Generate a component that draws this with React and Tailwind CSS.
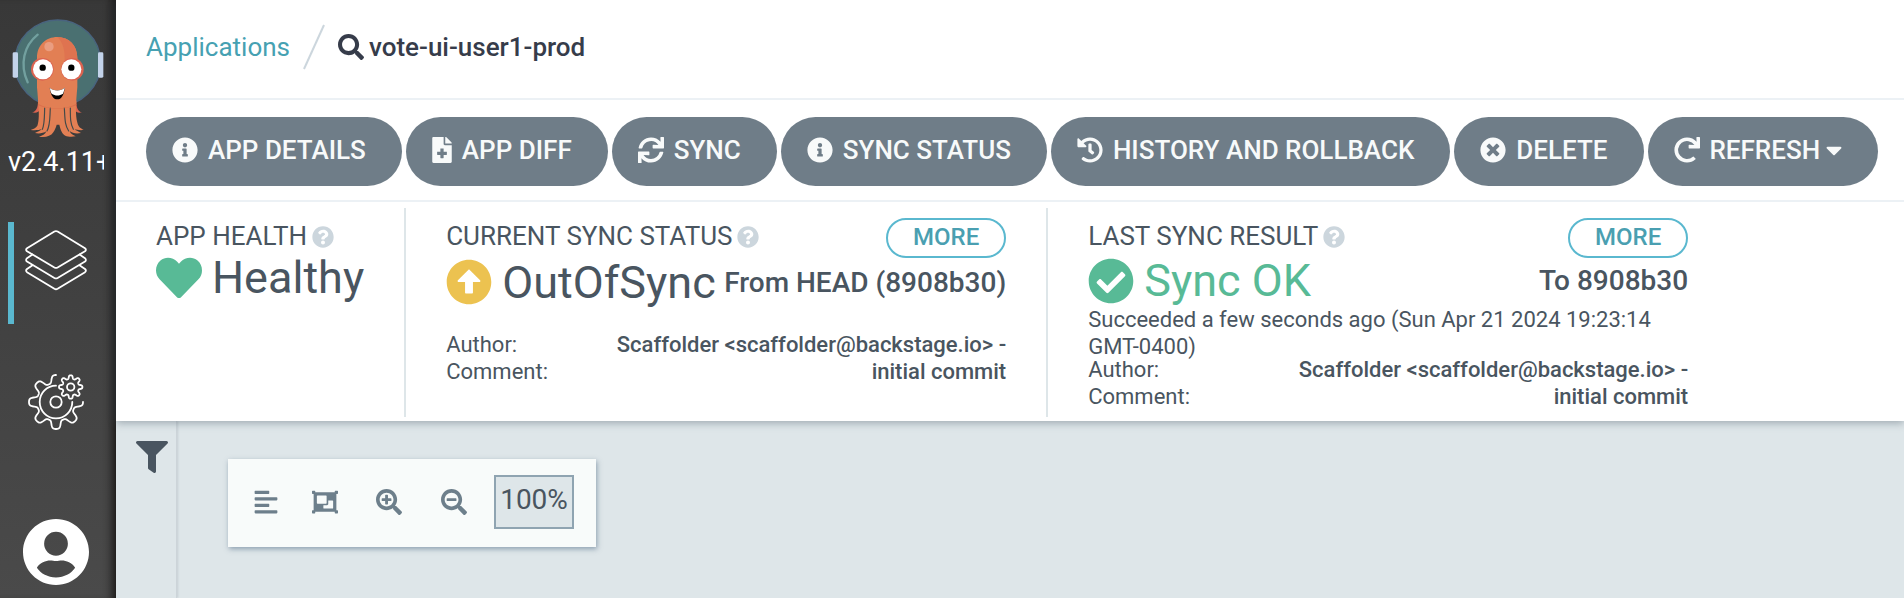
import React from 'react';
import {
  FaAlignLeft,
  FaArrowAltCircleUp,
  FaCaretDown,
  FaCheckCircle,
  FaFileMedical,
  FaFilter,
  FaHeart,
  FaHistory,
  FaInfoCircle,
  FaObjectGroup,
  FaQuestionCircle,
  FaRedo,
  FaSearch,
  FaSearchMinus,
  FaSearchPlus,
  FaSync,
  FaTimesCircle,
} from 'react-icons/fa';

function gearPath(cx, cy, mid, amp, teeth, from, to) {
  const steps = 240;
  const points = [];
  for (let i = 0; i <= steps; i += 1) {
    const deg = from + ((to - from) * i) / steps;
    const t = (deg * Math.PI) / 180;
    const r = mid + (amp * Math.tanh(1.8 * Math.cos(teeth * t))) / Math.tanh(1.8);
    points.push(`${(cx + r * Math.cos(t)).toFixed(2)} ${(cy + r * Math.sin(t)).toFixed(2)}`);
  }
  return `M${points.join('L')}`;
}

function ArgoLogo() {
  return (
    <svg viewBox="36 55 276 357" className="h-[119px] w-[92px]" role="img" aria-label="Argo">
      <circle cx="173" cy="187" r="129" fill="#4a7071" stroke="#49637f" strokeWidth="4" />
      <path d="M113 102C72 135 58 190 83 245" fill="none" stroke="#72a09f" strokeWidth="7" strokeLinecap="round" />
      <rect x="38" y="155" width="16" height="76" rx="4" fill="#c3d3ea" />
      <rect x="294" y="155" width="16" height="76" rx="4" fill="#c3d3ea" />
      <path d="M114 300C114 322 108 332 96 335C106 338 117 336 121 326ZM229 300C229 322 234 332 246 335C236 338 227 336 222 326Z" fill="#dc6450" />
      <path d="M111 172C111 134 137 109 172 109C207 109 232 134 232 172V260C230 282 229 296 228 314H115C114 296 113 282 111 260Z" fill="#e27f54" />
      <path d="M172 109C207 109 232 134 232 172V184H194C195 150 190 126 172 109Z" fill="#df7350" />
      <path d="M114 300H229C226 336 229 362 236 376C240 383 246 384 251 388C240 389 229 388 224 385C228 391 236 392 243 397C230 400 217 398 209 391C212 400 219 403 227 407C208 411 191 407 185 393C181 386 180 379 178 372H170C168 380 165 387 160 395C152 408 134 411 117 408C127 405 136 401 139 392C130 398 116 400 105 397C112 393 121 391 125 385C117 389 104 389 92 388C99 384 108 383 112 375C117 362 118 338 114 300Z" fill="#e27f54" />
      <path d="M134 322C133 352 134 370 127 386M151 322C149 354 151 373 141 391M193 322C195 354 194 373 206 391M211 322C211 352 211 370 220 386" fill="none" stroke="#424a49" strokeWidth="3.5" strokeLinecap="round" />
      <path d="M114 309C145 327 198 327 229 309V314C198 328 145 328 114 314Z" fill="#dc6f4c" />
      <circle cx="147" cy="138" r="14" fill="#ea9d80" />
      <circle cx="127" cy="206" r="34" fill="#dc6350" />
      <circle cx="217" cy="206" r="34" fill="#dc6350" />
      <circle cx="129" cy="206" r="30" fill="#ffffff" />
      <circle cx="214" cy="206" r="30" fill="#ffffff" />
      <circle cx="128" cy="201" r="9.500" fill="#000000" />
      <circle cx="214" cy="201" r="9.500" fill="#000000" />
      <path d="M149 261C152 283 160 296 172 296C184 296 192 283 194 261C182 272 161 272 149 261Z" fill="#000000" />
      <path d="M149 261C151 270 153 276 155 279C166 286 178 286 189 279C191 274 193 268 194 261C182 272 161 272 149 261Z" fill="#ffffff" />
    </svg>
  );
}

function LayersIcon() {
  return (
    <svg viewBox="0 0 62 62" className="h-[62px] w-[62px]" fill="none" stroke="#ffffff" strokeWidth="1.800" strokeLinejoin="round" strokeLinecap="round">
      <path d="M29.400 1.500Q31 .700 32.600 1.500L60 18.200Q61.800 19.700 60 21.200L32.600 37.500Q31 38.300 29.400 37.500L2 21.200Q.200 19.700 2 18.200Z" />
      <path d="M7.500 24.500L2 28.200Q.200 29.900 2 31.600L29.400 48Q31 48.900 32.600 48L60 31.600Q61.800 29.900 60 28.200L54.500 24.500" />
      <path d="M7.500 35.200L2 39Q.200 40.600 2 42.200L29.400 58.800Q31 59.700 32.600 58.800L60 42.200Q61.800 40.600 60 39L54.500 35.200" />
    </svg>
  );
}

function GearsIcon() {
  return (
    <svg viewBox="0 0 56 56" className="h-14 w-14" fill="none" stroke="#ffffff" strokeWidth="1.800" strokeLinejoin="round" strokeLinecap="round">
      <path d={gearPath(28, 28, 23, 4, 8, -90, -360)} />
      <path d="M28 11.700A16.300 16.300 0 1 0 44.300 28" />
      <circle cx="28" cy="28" r="5.700" />
      <path d={gearPath(42.7, 13, 10, 1.7, 8, 0, 360)} />
      <circle cx="42.700" cy="13" r="3.700" />
    </svg>
  );
}

function UserIcon() {
  return (
    <svg viewBox="2 2 20 20" className="h-[66px] w-[66px]" fill="#ffffff">
      <path d="M12 2C6.480 2 2 6.480 2 12s4.480 10 10 10 10-4.480 10-10S17.520 2 12 2zm0 3.900a3.600 3.600 0 1 1 0 7.200 3.600 3.600 0 0 1 0-7.200zm0 13.800c-2.500 0-4.600-1.100-5.800-2.900.8-1.500 2.800-2.200 4-2.200.7 0 1.200.15 1.800.15s1.100-.15 1.800-.15c1.200 0 3.200.7 4 2.200-1.200 1.800-3.300 2.900-5.800 2.900z" />
    </svg>
  );
}

function Sidebar() {
  return (
    <aside className="flex w-[116px] shrink-0 flex-col bg-linear-to-b from-[#383838] to-[#4a4a4a] text-white shadow-[inset_-10px_0_8px_-6px_#1c1a19]">
      <div className="flex justify-center pt-[19px]">
        <ArgoLogo />
      </div>
      <div className="mx-2 mt-[6px] w-24 overflow-hidden text-[27px] leading-9 whitespace-nowrap">v2.4.11+</div>
      <nav className="mt-[42px] flex flex-col">
        <a href="#applications" aria-label="Applications" className="ml-2 flex h-[102px] border-l-6 border-[#5ab8cf] pt-2 pl-[11px]">
          <LayersIcon />
        </a>
        <a href="#settings" aria-label="Settings" className="mt-[50px] ml-7">
          <GearsIcon />
        </a>
        <a href="#user" aria-label="User info" className="mt-[89px] mb-2 ml-[23px]">
          <UserIcon />
        </a>
      </nav>
    </aside>
  );
}

function ActionButton({ icon: Icon, narrow, caret, children }) {
  return (
    <button type="button" className="flex h-[69px] items-center gap-[10px] rounded-full bg-[#6f7d88] pr-9 pb-[3px] pl-[26px] text-[26px] font-medium whitespace-nowrap text-[#f8fafa]">
      <Icon className={narrow ? 'h-[26px] w-5' : 'h-[26px] w-[26px]'} />
      <span className="flex items-center gap-[6px]">
        {children}
        {caret && <FaCaretDown className="h-[26px] w-4" />}
      </span>
    </button>
  );
}

function PanelTitle({ children }) {
  return (
    <h2 className="flex items-center gap-[5px] text-[26px] leading-9 whitespace-nowrap">
      {children}
      <FaQuestionCircle className="mt-[2px] h-[22px] w-[22px] text-[#ccd6dd]" />
    </h2>
  );
}

function MoreButton() {
  return (
    <button type="button" className="flex h-10 w-[120px] items-center justify-center rounded-full border-2 border-[#5ab8cf] pb-[3px] text-2xl font-medium text-[#4a9fb1]">
      MORE
    </button>
  );
}

function CommitInfo() {
  return (
    <dl className="grid grid-cols-[auto_1fr]">
      <dt>Author:</dt>
      <dd className="text-right font-medium">Scaffolder &lt;scaffolder@backstage.io&gt; -</dd>
      <dt>Comment:</dt>
      <dd className="text-right font-medium">initial commit</dd>
    </dl>
  );
}

export default function App() {
  return (
    <div className="flex min-h-screen bg-[#dee6e9] font-['Roboto',sans-serif] text-[#495560]">
      <Sidebar />
      <div className="flex min-w-0 flex-1 flex-col">
        <header className="z-10 bg-white shadow-[0_2px_8px_rgba(60,75,90,0.4)]">
          <div className="flex h-[100px] items-center border-b-2 border-[#ecf1f5] pb-1 pl-[30px] text-[26px]">
            <a href="#applications" className="text-[#46a1b2]">Applications</a>
            <svg viewBox="0 0 24 46" className="mx-3 h-[46px] w-6" aria-hidden="true">
              <path d="M2 45L22 1" stroke="#ccd6dd" strokeWidth="2" />
            </svg>
            <h1 className="flex items-center gap-[5px] font-medium text-[#363c4a]">
              <FaSearch className="h-[26px] w-[26px]" />
              vote-ui-user1-prod
            </h1>
          </div>

          <div className="flex h-[102px] items-start gap-1 border-b-2 border-[#ecf1f5] pt-[17px] pl-[30px]">
            <ActionButton icon={FaInfoCircle}>APP DETAILS</ActionButton>
            <ActionButton icon={FaFileMedical} narrow>APP DIFF</ActionButton>
            <ActionButton icon={FaSync}>SYNC</ActionButton>
            <ActionButton icon={FaInfoCircle}>SYNC STATUS</ActionButton>
            <ActionButton icon={FaHistory}>HISTORY AND ROLLBACK</ActionButton>
            <ActionButton icon={FaTimesCircle}>DELETE</ActionButton>
            <ActionButton icon={FaRedo} caret>REFRESH</ActionButton>
          </div>

          <div className="flex pt-[6px] pb-1 text-[22px] leading-[27px]">
            <section className="border-r-2 border-[#dee6e9] px-10 pt-[10px]">
              <PanelTitle>APP HEALTH</PanelTitle>
              <div className="flex items-center gap-[10px] text-[45px] leading-[48px]">
                <FaHeart className="h-[46px] w-[46px] text-[#58ba96]" />
                Healthy
              </div>
            </section>

            <section className="border-r-2 border-[#dee6e9] px-10 pt-[10px]">
              <div className="w-[560px]">
                <div className="flex items-start justify-between">
                  <PanelTitle>CURRENT SYNC STATUS</PanelTitle>
                  <MoreButton />
                </div>
                <div className="mb-[25px] flex h-12 items-center justify-between whitespace-nowrap">
                  <div className="flex items-center gap-[10px] text-[45px]">
                    <FaArrowAltCircleUp className="h-[46px] w-[46px] text-[#ecc250]" />
                    OutOfSync
                  </div>
                  <div className="text-[28px] font-medium">From HEAD (8908b30)</div>
                </div>
                <CommitInfo />
              </div>
            </section>

            <section className="px-10 pt-[10px] pb-[7px]">
              <div className="w-[600px]">
                <div className="flex items-start justify-between">
                  <PanelTitle>LAST SYNC RESULT</PanelTitle>
                  <MoreButton />
                </div>
                <div className="mb-[3px] flex h-[45px] items-center justify-between whitespace-nowrap">
                  <div className="flex items-center gap-[10px] text-[45px] text-[#58ba96]">
                    <FaCheckCircle className="h-[46px] w-[46px]" />
                    Sync OK
                  </div>
                  <div className="text-[28px] font-medium">To 8908b30</div>
                </div>
                <p className="-mb-1">Succeeded a few seconds ago (Sun Apr 21 2024 19:23:14 GMT-0400)</p>
                <CommitInfo />
              </div>
            </section>
          </div>
        </header>

        <main className="flex flex-1 items-stretch">
          <div className="w-[61px] border-r border-[#ccd4d9] pt-5 pl-5 shadow-[1px_0_2px_rgba(60,75,90,0.15)]">
            <button type="button" aria-label="Filters" className="block">
              <FaFilter className="h-8 w-8" />
            </button>
          </div>
          <div className="pt-[38px] pl-[51px]">
            <div className="flex h-[88px] items-center bg-[#f8fbfa] pr-[22px] pb-[3px] pl-[26px] text-[#6d7f8b] shadow-[1px_2px_5px_rgba(60,90,120,0.5)]">
              <button type="button" aria-label="Align" className="mr-[34px]">
                <FaAlignLeft className="h-[26px] w-6" />
              </button>
              <button type="button" aria-label="Fit to screen" className="mr-[38px]">
                <FaObjectGroup className="h-[26px] w-[26px]" />
              </button>
              <button type="button" aria-label="Zoom in" className="mr-[39px]">
                <FaSearchPlus className="h-[26px] w-[26px]" />
              </button>
              <button type="button" aria-label="Zoom out" className="mr-[27px]">
                <FaSearchMinus className="h-[26px] w-[26px]" />
              </button>
              <div className="flex h-[54px] w-20 items-center justify-center border-2 border-[#8fa4b1] bg-[#dee6e9] pb-1 text-[28px] text-[#495560]">100%</div>
            </div>
          </div>
        </main>
      </div>
    </div>
  );
}
